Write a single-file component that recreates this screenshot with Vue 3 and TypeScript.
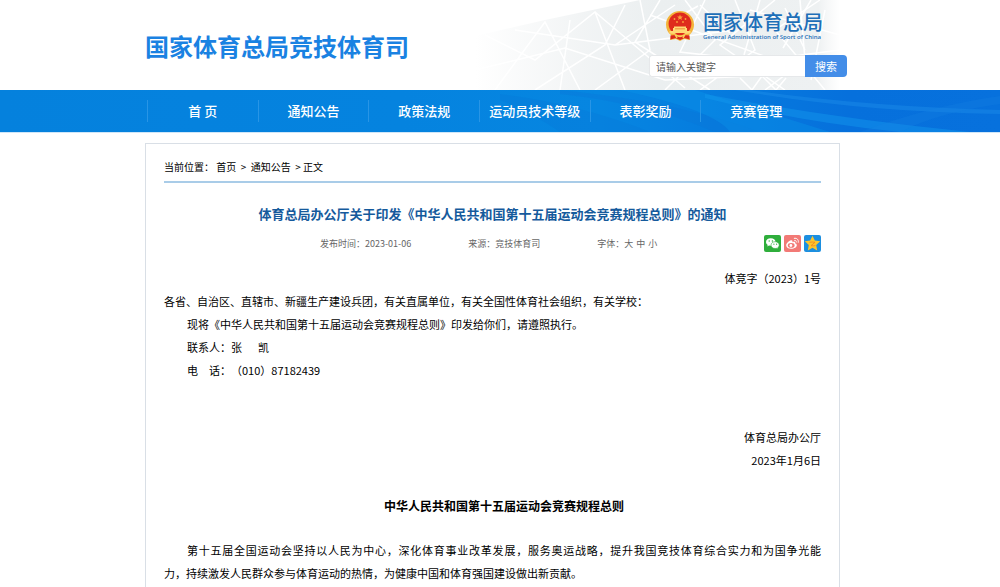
<script setup lang="ts">
const navItems: string[] = ['首 页', '通知公告', '政策法规', '运动员技术等级', '表彰奖励', '竞赛管理']
</script>

<template>
  <div class="page">
    <header class="header">
      <div class="wrap header-inner">
        <svg class="mesh" viewBox="0 0 365 90" preserveAspectRatio="none" aria-hidden="true">
          <defs>
            <linearGradient id="meshFade" x1="0" y1="0" x2="1" y2="0">
              <stop offset="0" stop-color="#eef1f2" stop-opacity="0" />
              <stop offset="0.3" stop-color="#eef1f2" stop-opacity="0.8" />
              <stop offset="0.5" stop-color="#ebeff0" />
              <stop offset="0.94" stop-color="#eef1f2" />
              <stop offset="1" stop-color="#f2f4f5" stop-opacity="0" />
            </linearGradient>
          </defs>
          <path d="M0 36 L70 20 L165 0 H365 V90 H0Z" fill="url(#meshFade)" />
          <g fill="none" stroke="#fff" stroke-width="1.5">
            <path d="M10 35L60 60L120 12L150 90M20 90L70 22L105 90M40 30L140 45L200 5M0 70L90 48L190 80M95 20L85 90M120 12L210 88M150 5L130 45L60 90M165 0L175 50L120 90M185 0L160 42L235 90M140 45L260 30M210 0L240 40L190 90M175 15L300 60M230 0L205 52L365 70M260 0L280 50L225 90M300 0L245 45L310 90M325 0L330 60L290 90M345 0L300 30L350 90M275 10L365 35M210 70L365 50M190 80L300 75" />
            <path d="M285 0l-16 55M310 8l20 42M336 0l-28 48M350 10l-14 70M265 78l12 12l10-14l14 14l10-12M225 5l30 28M198 20l25-14" />
          </g>
        </svg>
        <h1 class="site-title">国家体育总局竞技体育司</h1>
        <div class="header-side">
          <a class="brand" href="#">
            <svg class="emblem" viewBox="0 0 28 30" aria-hidden="true">
              <path d="M14 0C6 0 0 6 0 13.500C0 18 2 22 5 24L4 29L10 28L14 30L18 28L24 29L23 24C26 22 28 18 28 13.500C28 6 22 0 14 0Z" fill="#f3b43a" />
              <circle cx="14" cy="12.800" r="11.400" fill="#df2a1c" />
              <path d="M14 3.500l.8 2 2.100.1-1.600 1.300.6 2.100-1.900-1.200-1.900 1.200.6-2.100-1.600-1.300 2.100-.1z" fill="#f9a23c" />
              <g fill="#f9a23c"><circle cx="8.500" cy="8" r=".9" /><circle cx="11" cy="11" r=".9" /><circle cx="17" cy="11" r=".9" /><circle cx="19.500" cy="8" r=".9" /></g>
              <path d="M8 15.500h12v1.500h1v3h3.500v2.500l-5 .5-2-1h-7l-2 1-5-.5V20H7v-3h1z" fill="#ffd873" />
              <path d="M9 17.800h10" stroke="#e8792a" stroke-width=".8" />
              <path d="M4.500 24.500l5.500-.5 4 1.500 4-1.500 5.500.5v4l-5-1.500-4.500 2-4.500-2-5 1.500z" fill="#d9261c" />
              <path d="M9 23.500l2 3.500M19 23.500L17 27M10 24q4 3 8 0" stroke="#f9cf5c" stroke-width="1.500" fill="none" />
            </svg>
            <span class="brand-text">
              <span class="brand-cn">国家体育总局</span>
              <span class="brand-en">General Administration of Sport of China</span>
            </span>
          </a>
          <form class="search" @submit.prevent>
            <input type="text" aria-label="请输入关键字" placeholder="请输入关键字" />
            <button type="submit">搜索</button>
          </form>
        </div>
      </div>
    </header>

    <nav class="nav">
      <svg class="streaks" viewBox="0 0 500 42" preserveAspectRatio="none" aria-hidden="true">
        <path d="M0 4Q80 14 150 42H60Q30 22 0 10Z" fill="#0878d6" opacity=".3" />
        <path d="M60 0Q180 12 260 42H215Q150 14 60 4Z" fill="#0a74d6" opacity=".3" />
        <path d="M195 0L330 42H230Q215 20 120 0Z" fill="#0b94e8" opacity=".4" />
        <path d="M205 4Q330 28 470 42H400Q300 32 205 8Z" fill="#159aed" opacity=".45" />
        <path d="M250 0Q360 16 500 20V24Q360 22 235 0Z" fill="#2191ea" opacity=".4" />
        <path d="M500 6Q430 16 360 42H400Q440 22 500 14Z" fill="#1684e4" opacity=".25" />
      </svg>
      <div class="wrap">
        <ul class="nav-list">
          <li v-for="item in navItems" :key="item"><a href="#">{{ item }}</a></li>
        </ul>
      </div>
    </nav>

    <main class="main">
      <article class="wrap article">
        <div class="crumbs">当前位置： <a href="#">首页</a>&nbsp;&nbsp;&gt;&nbsp;&nbsp;<a href="#">通知公告</a>&nbsp;&nbsp;&gt; 正文</div>
        <h2 class="title">体育总局办公厅关于印发《中华人民共和国第十五届运动会竞赛规程总则》的通知</h2>
        <div class="meta">
          <span>发布时间：2023-01-06</span>
          <span>来源：竞技体育司</span>
          <span class="sizes">字体：<button type="button">大</button><button type="button">中</button><button type="button">小</button></span>
          <span class="share">
            <a href="#" aria-label="微信">
              <svg viewBox="0 0 17 17"><rect width="17" height="17" rx="2" fill="#2fae3c" /><path d="M6.800 3.200C4 3.200 2 4.900 2 7c0 1.200.7 2.200 1.700 2.900l-.4 1.500 1.700-.9 1.800.3c2.700 0 4.800-1.700 4.800-3.800S9.500 3.200 6.800 3.200z" fill="#fff" /><path d="M11.200 6.700c-2.400 0-4.200 1.500-4.200 3.400s1.800 3.400 4.200 3.400l1.400-.2 1.500.8-.4-1.300c.9-.6 1.500-1.600 1.500-2.700 0-1.900-1.700-3.400-4-3.400z" fill="#fff" stroke="#2fae3c" stroke-width=".6" /><g fill="#2fae3c"><circle cx="5.200" cy="6" r=".7" /><circle cx="8.400" cy="6" r=".7" /><circle cx="9.900" cy="9.200" r=".6" /><circle cx="12.600" cy="9.200" r=".6" /></g></svg>
            </a>
            <a href="#" aria-label="微博">
              <svg viewBox="0 0 17 17"><rect width="17" height="17" rx="2" fill="#f27a76" /><path d="M7 5.300C5 5.800 2.200 8.200 2.200 10.400c0 2 2.300 3.300 5 3.300 3.300 0 5.600-1.700 5.600-3.500 0-1.100-.9-1.700-1.800-1.900.5-1.500-.6-1.900-2.600-1.100.4-1.300-.1-2.100-1.400-1.900z" fill="#fff" /><ellipse cx="7.200" cy="10.400" rx="3.400" ry="2.300" fill="#f27a76" /><circle cx="6.900" cy="10.500" r="1.400" fill="#fff" /><path d="M10.300 3.300c2.600-.6 4.600 1.500 4 4M10.700 5.400c1.100-.2 1.900.6 1.600 1.700" fill="none" stroke="#fff" stroke-width="1" stroke-linecap="round" /></svg>
            </a>
            <a href="#" aria-label="QQ空间">
              <svg viewBox="0 0 17 17"><rect width="17" height="17" rx="2" fill="#1c8fe0" /><path d="M8.500 .8l2.300 4.800 5.400.7-4 3.700 1 5.400-4.700-2.700-4.700 2.700 1-5.400-4-3.700 5.400-.7z" fill="#fdc52b" /><path d="M5.500 7.300q3-.6 5.500 0l-4 3.300q2.500.5 4.500 0" fill="none" stroke="#ee8a20" stroke-width=".9" /></svg>
            </a>
          </span>
        </div>
        <div class="body">
          <p class="right">体竞字（2023）1号</p>
          <p>各省、自治区、直辖市、新疆生产建设兵团，有关直属单位，有关全国性体育社会组织，有关学校：</p>
          <p class="indent">现将《中华人民共和国第十五届运动会竞赛规程总则》印发给你们，请遵照执行。</p>
          <p class="indent">联系人：张&emsp;&nbsp; 凯</p>
          <p class="indent">电&emsp;话：（010）87182439</p>
          <p class="blank"></p>
          <p class="blank"></p>
          <p class="right">体育总局办公厅</p>
          <p class="right">2023年1月6日</p>
          <p class="blank"></p>
          <h3 class="indent">中华人民共和国第十五届运动会竞赛规程总则</h3>
          <p class="blank"></p>
          <p class="indent full">第十五届全国运动会坚持以人民为中心，深化体育事业改革发展，服务奥运战略，提升我国竞技体育综合实力和为国争光能</p>
          <p>力，持续激发人民群众参与体育运动的热情，为健康中国和体育强国建设做出新贡献。</p>
        </div>
      </article>
    </main>
  </div>
</template>

<style>
body {
  margin: 0;
  background: #fff;
}
</style>

<style scoped>
.page {
  height: 100vh;
  overflow: hidden;
  font-family: "Noto Sans CJK SC", sans-serif;
  text-spacing-trim: space-all;
  color: #000;
}
.page * {
  box-sizing: border-box;
}
a {
  color: inherit;
  text-decoration: none;
}
button,
input {
  font-family: inherit;
}
.header,
.nav,
.main {
  padding-right: 15px;
}
.wrap {
  width: min(695px, 96%);
  margin: 0 auto;
}
.header-inner {
  position: relative;
  display: flex;
  justify-content: space-between;
  height: 90px;
}
.mesh {
  position: absolute;
  right: 0;
  top: 0;
  width: 365px;
  height: 90px;
}
.site-title {
  position: relative;
  margin: 0;
  padding-top: 28px;
  font-size: 24px;
  line-height: 36px;
  font-weight: 700;
  color: #1a82e2;
}
.header-side {
  position: relative;
  width: 198px;
  margin-right: -7px;
  padding-top: 11px;
}
.brand {
  display: flex;
  gap: 9px;
  height: 44px;
  padding-left: 17px;
}
.emblem {
  width: 28px;
  height: 30px;
}
.brand-text {
  display: flex;
  flex-direction: column;
  color: #1d6fb8;
  white-space: nowrap;
}
.brand-cn {
  font-size: 20px;
  line-height: 21px;
  font-weight: 500;
}
.brand-en {
  font-family: "Open Sans", sans-serif;
  font-size: 6px;
  line-height: 10px;
  font-weight: 600;
}
.search {
  display: flex;
  height: 22px;
}
.search input {
  flex: 1;
  min-width: 0;
  padding: 0 6px;
  border: 1px solid #e6e8ea;
  border-right: 0;
  border-radius: 3px 0 0 3px;
  background: #fff;
  font-size: 10px;
}
.search input::placeholder {
  color: #555;
  opacity: 1;
}
.search button {
  width: 42px;
  padding: 0;
  border: 0;
  border-radius: 0 4px 4px 0;
  background: #438de8;
  color: #fff;
  font-size: 11px;
}
.nav {
  position: relative;
  height: 42px;
  background: linear-gradient(90deg, #0581dd 0%, #0583df 40%, #0686e1 60%, #0670dc 85%, #0771dd 100%);
  box-shadow: 0 1px 0 #cfe6f8;
}
.streaks {
  position: absolute;
  right: 0;
  top: 0;
  width: 50%;
  height: 100%;
}
.nav-list {
  position: relative;
  display: grid;
  grid-template-columns: repeat(6, 1fr);
  margin: 0;
  padding: 10px 29px 10px 2px;
  list-style: none;
}
.nav-list li {
  border-left: 1px solid #2895e6;
  text-align: center;
  font-size: 13px;
  line-height: 22px;
  font-weight: 500;
  color: #fff;
  white-space: nowrap;
}
.main {
  padding-top: 11px;
}
.article {
  min-height: 460px;
  padding: 13px 18px;
  border: 1px solid #d9dfe6;
}
.crumbs {
  padding-bottom: 4px;
  border-bottom: 2px solid #a9cce8;
  font-size: 10px;
  line-height: 20px;
}
.title {
  margin: 21px 0 0;
  font-size: 13px;
  line-height: 20px;
  font-weight: 700;
  text-align: center;
  color: #155a9c;
}
.meta {
  display: flex;
  align-items: center;
  gap: 57px;
  height: 18px;
  margin-top: 10px;
  padding-left: 156px;
  font-size: 9px;
  color: #666;
}
.sizes {
  display: flex;
}
.sizes button {
  padding: 0;
  margin-right: 3px;
  border: 0;
  background: none;
  font-size: 9px;
  color: inherit;
}
.share {
  display: flex;
  gap: 3px;
  margin-left: auto;
}
.share svg {
  display: block;
  width: 17px;
  height: 17px;
}
.body {
  margin-top: 15px;
  font-size: 11px;
  line-height: 23px;
}
.body p,
.body h3 {
  margin: 0;
}
.body h3 {
  font-size: 12px;
  text-align: center;
}
.body .right {
  text-align: right;
}
.body .indent {
  padding-left: 23px;
}
.body .full {
  text-align-last: justify;
}
.body .blank {
  height: 22px;
}
</style>
